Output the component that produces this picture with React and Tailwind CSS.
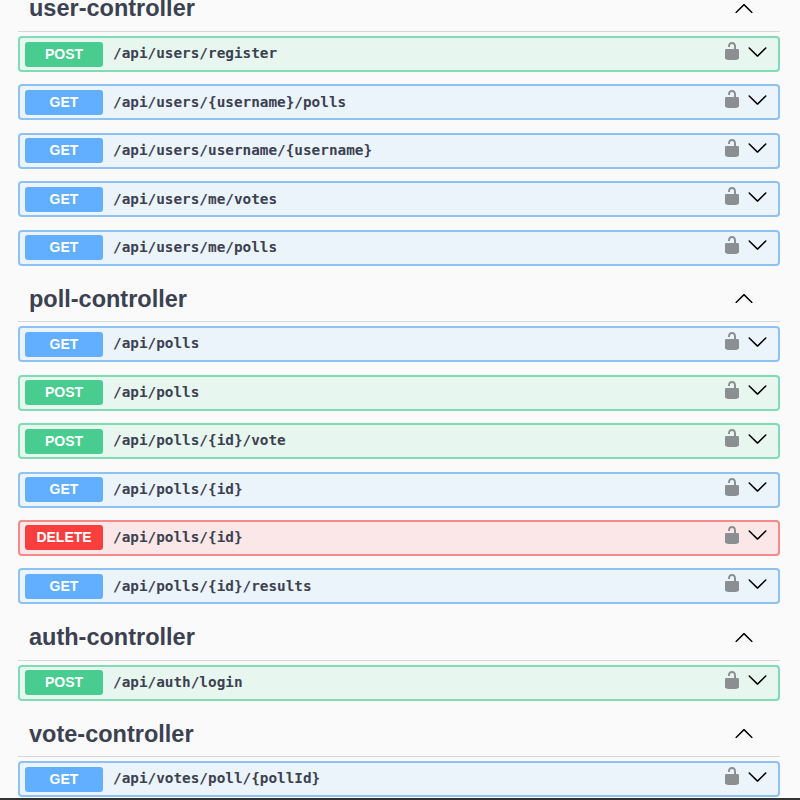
import React from "react"

const sections = [
	{
		name: "user-controller",
		routes: [
			["POST", "/api/users/register"],
			["GET", "/api/users/{username}/polls"],
			["GET", "/api/users/username/{username}"],
			["GET", "/api/users/me/votes"],
			["GET", "/api/users/me/polls"],
		],
	},
	{
		name: "poll-controller",
		routes: [
			["GET", "/api/polls"],
			["POST", "/api/polls"],
			["POST", "/api/polls/{id}/vote"],
			["GET", "/api/polls/{id}"],
			["DELETE", "/api/polls/{id}"],
			["GET", "/api/polls/{id}/results"],
		],
	},
	{ name: "auth-controller", routes: [["POST", "/api/auth/login"]] },
	{ name: "vote-controller", routes: [["GET", "/api/votes/poll/{pollId}"]] },
]

const rowStyles = {
	GET: "bg-[#ebf3fb] border-[#8ec2f5]",
	POST: "bg-[#e8f6f0] border-[#7fdcb5]",
	DELETE: "bg-[#fbe7e7] border-[#f58a8a]",
}

const badgeStyles = {
	GET: "bg-[#61affe]",
	POST: "bg-[#49cc90]",
	DELETE: "bg-[#f93e3e]",
}

function Chevron({ className }) {
	return (
		<svg viewBox="0 0 20 20" className={className} fill="currentColor">
			<path d="M17.418 6.109c.272-.268.709-.268.979 0s.271.701 0 .969l-7.908 7.83c-.27.268-.707.268-.979 0l-7.908-7.83c-.27-.268-.27-.701 0-.969.271-.268.709-.268.979 0L10 13.25l7.418-7.141z" />
		</svg>
	)
}

function Lock() {
	return (
		<svg viewBox="0 0 20 20" className="w-[20px] h-[20px] text-[#8b8f92]" fill="currentColor">
			<path d="M15.8 8H14V5.6C14 2.703 12.665 1 10 1 7.334 1 6 2.703 6 5.6V6h2v-.801C8 3.754 8.797 3 10 3c1.203 0 2 .754 2 2.199V8H4c-.553 0-1 .646-1 1.199V17c0 .549.428 1.139.951 1.307l1.197.387C5.672 18.861 6.55 19 7.1 19h5.8c.549 0 1.428-.139 1.951-.307l1.196-.387c.524-.167.953-.757.953-1.306V9.199C17 8.646 16.352 8 15.8 8z" />
		</svg>
	)
}

function Route({ method, path }) {
	return (
		<div className={`flex items-center h-[36px] mb-[12.45px] pl-[5px] pr-[10px] border-2 rounded-[4px] ${rowStyles[method]}`}>
			<span className={`w-[78px] h-[25px] flex items-center justify-center rounded-[3px] text-white text-[14px] font-bold font-['Liberation_Sans',sans-serif] ${badgeStyles[method]}`}>
				{method}
			</span>
			<span className="ml-[10px] flex-1 text-[14.35px] font-bold text-[#3b4151] font-['DejaVu_Sans_Mono',monospace]">
				{path}
			</span>
			<div className="flex items-center gap-[5px] mt-[-6px]">
				<Lock />
				<Chevron className="w-[21px] h-[21px] text-black" />
			</div>
		</div>
	)
}

export default function App() {
	return (
		<div className="relative h-[800px] w-[800px] overflow-hidden bg-[#fafafa]">
			<div className="mt-[-12px] pl-[18px] pr-[20px]">
				{sections.map((section) => (
					<section key={section.name}>
						<div className="flex items-center h-[44px] mb-[4px] pb-[1px] border-b border-[#d5d7da] pl-[11px] pr-[26px]">
							<h2 className="flex-1 text-[23.5px] font-bold text-[#3b4151] font-['Liberation_Sans',sans-serif]">
								{section.name}
							</h2>
							<Chevron className="w-[20px] h-[20px] rotate-180 text-black" />
						</div>
						{section.routes.map(([method, path]) => (
							<Route key={method + path} method={method} path={path} />
						))}
					</section>
				))}
			</div>
			<div className="absolute bottom-0 left-0 right-0 h-[2px] bg-[#333]" />
		</div>
	)
}
